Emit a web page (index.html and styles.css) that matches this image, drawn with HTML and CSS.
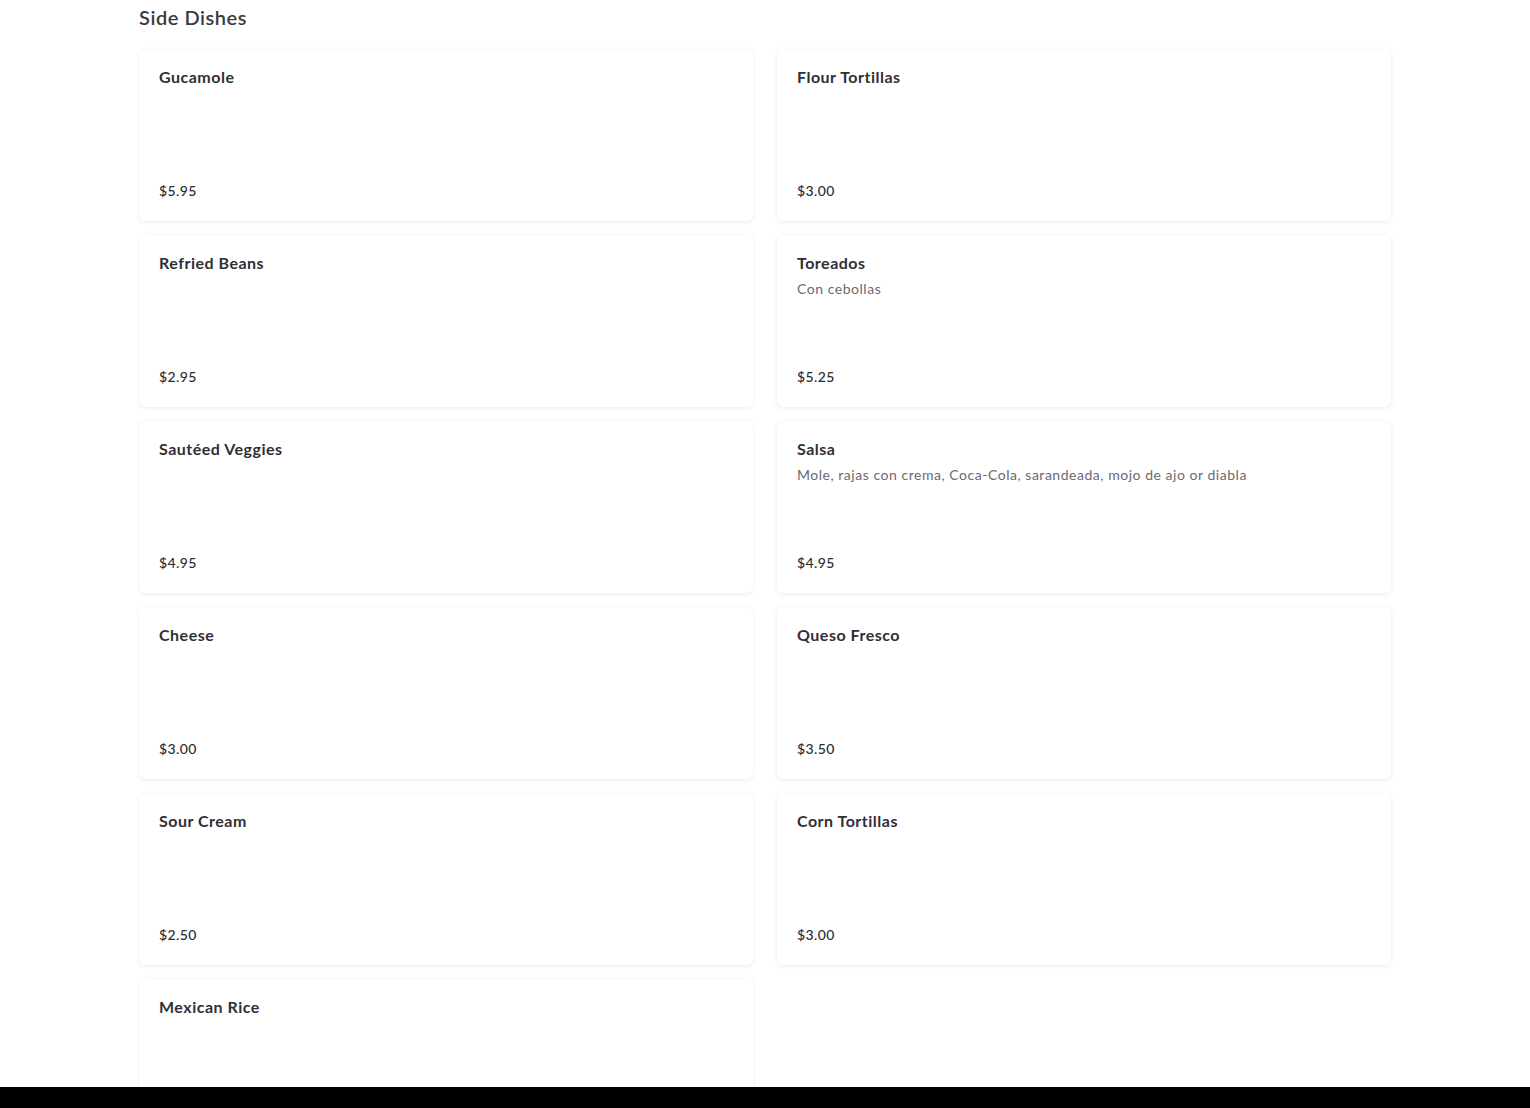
FILE: index.html
```html
<!DOCTYPE html>
<html lang="en">
<head>
<meta charset="utf-8">
<title>Side Dishes</title>
<link rel="stylesheet" href="styles.css">
</head>
<body>
<main class="menu">
  <h2 class="section-title">Side Dishes</h2>
  <div class="grid">
    <div class="card"><div class="name">Gucamole</div><div class="price">$5.95</div></div>
    <div class="card"><div class="name">Flour Tortillas</div><div class="price">$3.00</div></div>
    <div class="card"><div class="name">Refried Beans</div><div class="price">$2.95</div></div>
    <div class="card"><div class="name">Toreados</div><div class="desc">Con cebollas</div><div class="price">$5.25</div></div>
    <div class="card"><div class="name">Sautéed Veggies</div><div class="price">$4.95</div></div>
    <div class="card"><div class="name">Salsa</div><div class="desc">Mole, rajas con crema, Coca-Cola, sarandeada, mojo de ajo or diabla</div><div class="price">$4.95</div></div>
    <div class="card"><div class="name">Cheese</div><div class="price">$3.00</div></div>
    <div class="card"><div class="name">Queso Fresco</div><div class="price">$3.50</div></div>
    <div class="card"><div class="name">Sour Cream</div><div class="price">$2.50</div></div>
    <div class="card"><div class="name">Corn Tortillas</div><div class="price">$3.00</div></div>
    <div class="card"><div class="name">Mexican Rice</div><div class="price">$2.95</div></div>
  </div>
</main>
<div class="bottom-bar"></div>
</body>
</html>
```
FILE: styles.css
```css
* { box-sizing: border-box; }
html, body { margin: 0; padding: 0; background: #fff; }
body {
  font-family: "Lato", "Noto Sans", sans-serif;
  color: #2d2d33;
}
.menu {
  width: 1252px;
  margin: 0 0 0 139px;
  padding-bottom: 40px;
}
.section-title {
  margin: 0;
  padding-top: 5px;
  height: 49px;
  font-size: 20px;
  line-height: 24px;
  font-weight: 600;
  color: #3a3a40;
  letter-spacing: 0.55px;
}
.grid {
  display: grid;
  grid-template-columns: 614px 614px;
  column-gap: 24px;
  row-gap: 14px;
}
.card {
  background: #fff;
  border-radius: 6px;
  min-height: 172px;
  padding: 20px 20px 23px 20px;
  display: flex;
  flex-direction: column;
  box-shadow: 0 1px 5px rgba(0, 0, 0, 0.08), 0 0 1px rgba(0, 0, 0, 0.04);
}
.name {
  font-size: 16px;
  line-height: 16px;
  font-weight: 700;
  color: #2f2f35;
  letter-spacing: 0.5px;
}
.desc {
  margin-top: 10px;
  font-size: 14px;
  line-height: 16px;
  color: #6a6a70;
  letter-spacing: 0.53px;
}
.price {
  margin-top: auto;
  font-size: 14px;
  line-height: 14px;
  font-weight: 500;
  color: #2d2d33;
  letter-spacing: 0.4px;
}
.bottom-bar {
  position: fixed;
  left: 0;
  right: 0;
  bottom: 0;
  height: 21px;
  background: #000;
}
```
